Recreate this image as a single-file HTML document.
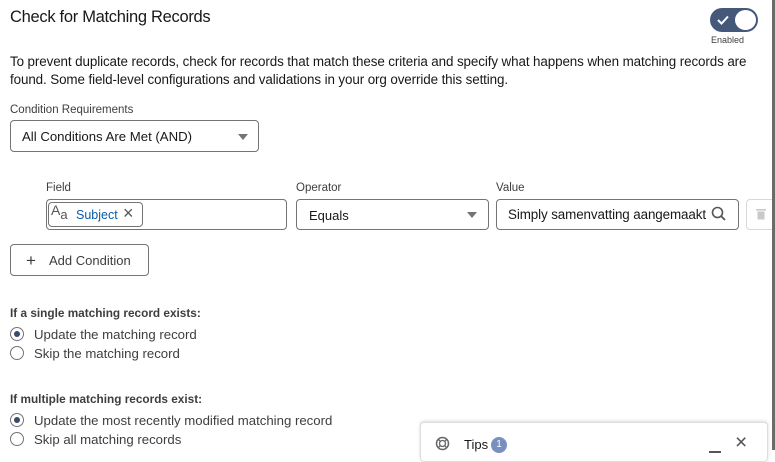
<!DOCTYPE html>
<html><head><meta charset="utf-8"><style>
*{box-sizing:border-box;margin:0;padding:0}
body{width:775px;height:455px;overflow:hidden;background:#fff;font-family:"Liberation Sans",sans-serif;color:#181818;position:relative}
.a{position:absolute;white-space:nowrap}
.box{position:absolute;border:1px solid #747474;border-radius:4px;background:#fff}
.lbl{font-size:11.5px;color:#3e3e3c}
.caret{position:absolute;width:0;height:0;border-left:5px solid transparent;border-right:5px solid transparent;border-top:6px solid #747474}
.radio{position:absolute;width:14px;height:14px;border:1px solid #747474;border-radius:50%;background:#fff}
.radio.on::after{content:"";position:absolute;left:3px;top:3px;width:6px;height:6px;border-radius:50%;background:#3a4a6b}
.rt{font-size:13.2px;color:#3e3e3c}
</style></head><body>
<div class="a" style="left:10px;top:8px;font-size:16.5px;letter-spacing:-0.3px">Check for Matching Records</div>
<div class="a" style="left:710px;top:8px;width:48px;height:24px;border-radius:12px;background:#45587a"></div>
<div class="a" style="left:735px;top:10px;width:21px;height:20px;border-radius:50%;background:#fff"></div>
<svg class="a" style="left:716px;top:14px" width="14" height="12"><path d="M2 6 L5.5 9.5 L12 2.5" stroke="#fff" stroke-width="2" fill="none"/></svg>
<div class="a" style="left:711px;top:35px;font-size:9px;color:#3e3e3c">Enabled</div>
<div class="a" style="left:10px;top:53px;font-size:13.4px;line-height:18px;letter-spacing:-0.1px">To prevent duplicate records, check for records that match these criteria and specify what happens when matching records are<br>found. Some field-level configurations and validations in your org override this setting.</div>
<div class="a lbl" style="left:10px;top:104px">Condition Requirements</div>
<div class="box" style="left:10px;top:120px;width:249px;height:32px"></div>
<div class="a" style="left:22px;top:129px;font-size:13.2px">All Conditions Are Met (AND)</div>
<div class="caret" style="left:238px;top:134px"></div>
<div class="a lbl" style="left:46px;top:182px">Field</div>
<div class="a lbl" style="left:296px;top:182px">Operator</div>
<div class="a lbl" style="left:496px;top:182px">Value</div>
<div class="box" style="left:46px;top:199px;width:241px;height:31px"></div>
<div class="a" style="left:48px;top:202px;height:25px;border:1px solid #747474;border-radius:4px;width:95px"></div>
<div class="a" style="left:51px;top:202px;font-size:14px;color:#555">A<span style="font-size:13px;position:relative;top:4px">a</span></div>
<div class="a" style="left:76px;top:208px;font-size:12.5px;color:#0b5cab">Subject</div>
<div class="a" style="left:123px;top:203px;font-size:18px;color:#555">×</div>
<div class="box" style="left:296px;top:199px;width:193px;height:31px"></div>
<div class="a" style="left:309px;top:208px;font-size:13px">Equals</div>
<div class="caret" style="left:467px;top:212px"></div>
<div class="box" style="left:496px;top:199px;width:243px;height:31px"></div>
<div class="a" style="left:508px;top:207px;font-size:13.4px;letter-spacing:-0.1px">Simply samenvatting aangemaakt</div>
<svg class="a" style="left:711px;top:206px" width="16" height="16"><circle cx="6.5" cy="6.5" r="5" stroke="#555" stroke-width="1.6" fill="none"/><path d="M10 10 L14 14" stroke="#555" stroke-width="1.8"/></svg>
<div class="a" style="left:746px;top:199px;width:30px;height:31px;border:1px solid #d8d8d8;border-radius:4px"></div>
<svg class="a" style="left:755px;top:207px" width="12" height="14"><rect x="1" y="2" width="10" height="1.6" fill="#c9c9c9"/><rect x="2.5" y="4.5" width="7" height="8" fill="#c9c9c9"/></svg>
<div class="box" style="left:10px;top:244px;width:139px;height:32px"></div>
<div class="a" style="left:26px;top:251px;font-size:17px;color:#3e3e3c">+</div>
<div class="a" style="left:49px;top:253px;font-size:13px;color:#3e3e3c">Add Condition</div>
<div class="a" style="left:10px;top:306px;font-size:11.8px;font-weight:bold;color:#3e3e3c">If a single matching record exists:</div>
<div class="radio on" style="left:10px;top:327px"></div><div class="a rt" style="left:34px;top:327px">Update the matching record</div>
<div class="radio" style="left:10px;top:346px"></div><div class="a rt" style="left:34px;top:346px">Skip the matching record</div>
<div class="a" style="left:10px;top:392px;font-size:11.8px;font-weight:bold;color:#3e3e3c">If multiple matching records exist:</div>
<div class="radio on" style="left:10px;top:413px"></div><div class="a rt" style="left:34px;top:413px">Update the most recently modified matching record</div>
<div class="radio" style="left:10px;top:432px"></div><div class="a rt" style="left:34px;top:432px">Skip all matching records</div>
<div class="a" style="left:420px;top:422px;width:348px;height:40px;border:1px solid #ddd;border-radius:4px;background:#fff;box-shadow:0 -1px 3px rgba(0,0,0,.15)"></div>
<svg class="a" style="left:435px;top:436px" width="15" height="15"><circle cx="7.5" cy="7.5" r="6" stroke="#666" stroke-width="1.5" fill="none"/><circle cx="7.5" cy="7.5" r="3" stroke="#666" stroke-width="1.3" fill="none"/><path d="M3.3 3.3L5.4 5.4M11.7 3.3L9.6 5.4M3.3 11.7L5.4 9.6M11.7 11.7L9.6 9.6" stroke="#666" stroke-width="1.3"/></svg>
<div class="a" style="left:464px;top:437px;font-size:13px">Tips</div>
<div class="a" style="left:491px;top:437px;width:16px;height:16px;border-radius:50%;background:#7890c0;color:#fff;font-size:10px;text-align:center;line-height:16px">1</div>
<div class="a" style="left:709px;top:451px;width:12px;height:1.5px;background:#555"></div>
<div class="a" style="left:735px;top:431px;font-size:21px;color:#555">×</div>
<div class="a" style="left:772px;top:0;width:3px;height:450px;background:#6b6b6b"></div>
</body></html>
